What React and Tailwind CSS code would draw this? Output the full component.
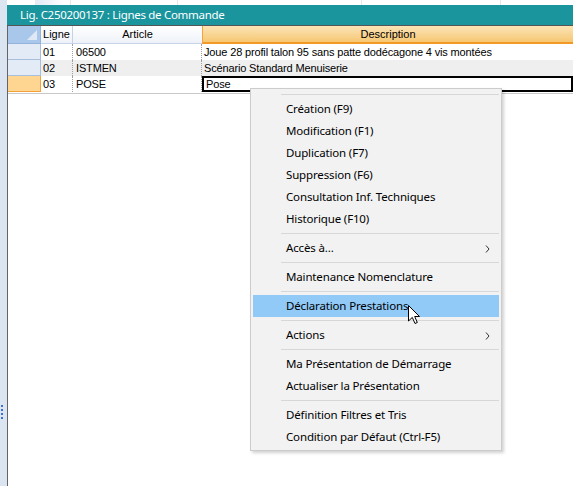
import React from "react";

const menuFont = { fontFamily: '"Noto Sans", "Open Sans", sans-serif' };

function Sep() {
  return (
    <div className="h-[7px] flex items-center pl-[28px]">
      <div className="h-px w-full bg-[#d7d7d7]" />
    </div>
  );
}

function Item({ label, sub, active }) {
  return (
    <div
      className={
        "relative h-[22px] flex items-center pl-[33px] text-[11.5px] tracking-[-0.15px] text-black " +
        (active ? "bg-[#91c9f7]" : "")
      }
    >
      {label}
      {sub && (
        <svg className="absolute right-[9px] top-[8px]" width="5" height="8" viewBox="0 0 5 8">
          <path d="M1 0.5 L4 4 L1 7.5" fill="none" stroke="#333" strokeWidth="1" />
        </svg>
      )}
    </div>
  );
}

function ContextMenu() {
  return (
    <div
      className="absolute left-[250px] top-[88px] w-[252px] bg-[#f2f2f2] border border-[#cccccc] p-[2px] shadow-[2px_2px_3px_rgba(0,0,0,0.18)]"
      style={menuFont}
    >
      <Sep />
      <Item label="Création (F9)" />
      <Item label="Modification (F1)" />
      <Item label="Duplication (F7)" />
      <Item label="Suppression (F6)" />
      <Item label="Consultation Inf. Techniques" />
      <Item label="Historique (F10)" />
      <Sep />
      <Item label="Accès à..." sub />
      <Sep />
      <Item label="Maintenance Nomenclature" />
      <Sep />
      <Item label="Déclaration Prestations" active />
      <Sep />
      <Item label="Actions" sub />
      <Sep />
      <Item label="Ma Présentation de Démarrage" />
      <Item label="Actualiser la Présentation" />
      <Sep />
      <Item label="Définition Filtres et Tris" />
      <Item label="Condition par Défaut (Ctrl-F5)" />
    </div>
  );
}

function Cursor() {
  return (
    <svg className="absolute left-[408px] top-[305px]" width="14" height="20" viewBox="0 0 14 20">
      <path
        d="M0.5 0.5 L0.5 16 L4.3 12.4 L7 18.5 L9.3 17.5 L6.7 11.5 L11.5 11.5 Z"
        fill="#fff"
        stroke="#000"
        strokeWidth="1"
        strokeLinejoin="miter"
      />
    </svg>
  );
}

const rows = [
  { n: "01", a: "06500", d: "Joue 28 profil talon 95 sans patte dodécagone 4 vis montées", bg: "bg-white" },
  { n: "02", a: "ISTMEN", d: "Scénario Standard Menuiserie", bg: "bg-[#efefef]" },
  { n: "03", a: "POSE", d: "Pose", bg: "bg-white", current: true },
];

function Grid() {
  return (
    <div className="flex-1 flex flex-col border-l border-[#646464] bg-white">
      {/* header */}
      <div className="flex h-[18px] text-[11px] text-black">
        <div className="relative w-[33px] h-full bg-[#a9c6eb] border-r border-b border-[#93b2dc]">
          <div className="absolute right-[3px] bottom-[3px] w-0 h-0 border-l-[10px] border-l-transparent border-b-[10px] border-b-[#dfe8f4]" />
        </div>
        <div className="w-[32px] h-full flex items-center justify-center bg-gradient-to-b from-white to-[#eef2f8] border-r border-b border-[#c6d3e6]">
          Ligne
        </div>
        <div className="w-[129px] h-full flex items-center justify-center bg-gradient-to-b from-white to-[#eef2f8] border-b border-[#c6d3e6]">
          Article
        </div>
        <div className="flex-1 h-full flex items-center justify-center bg-gradient-to-b from-[#fbe4b6] to-[#f6c772] border-l border-[#f2a33a] border-b-2 border-b-[#f39a26]">
          Description
        </div>
      </div>
      {rows.map((r) => (
        <div key={r.n} className="flex h-[16px] text-[11px] tracking-[-0.15px] text-black leading-none">
          <div
            className={
              "w-[33px] h-full border-r border-b " +
              (r.current ? "bg-[#fed591] border-[#f2a13c]" : "bg-[#e3ebf7] border-[#a7bedd]")
            }
          />
          <div className={"w-[32px] h-full flex items-center pl-[2px] border-r border-dotted border-[#a0a0a0] " + r.bg}>
            {r.n}
          </div>
          <div className={"w-[129px] h-full flex items-center pl-[3px] border-r border-dotted border-[#a0a0a0] " + r.bg}>
            {r.a}
          </div>
          <div
            className={
              "flex-1 h-full flex items-center pl-[2px] " +
              (r.current ? "border-2 border-black bg-white" : r.bg)
            }
          >
            {r.d}
          </div>
        </div>
      ))}
      <div className="h-[2px] border-b border-[#c8c8c8]" />
      <div className="flex-1" />
    </div>
  );
}

export default function App() {
  return (
    <div
      className="relative w-[573px] h-[486px] bg-white overflow-hidden flex flex-col"
      style={{ fontFamily: '"Liberation Sans", Arial, sans-serif' }}
    >
      {/* toolbar remnant */}
      <div className="h-[5px] flex bg-white">
        <div className="w-[7px] h-full bg-[#dce6f3]" />
        <div className="w-[28px]" />
        <div className="w-[30px] h-full bg-gradient-to-r from-[#e2eaf5] to-white" />
        <div className="w-px h-full bg-[#e3e6ea] ml-[5px]" />
        <div className="w-[106px]" />
        <div className="w-px h-full bg-[#e3e6ea]" />
        <div className="w-[183px]" />
        <div className="w-px h-full bg-[#e3e6ea]" />
        <div className="w-[138px]" />
        <div className="w-px h-full bg-[#e3e6ea]" />
      </div>
      <div className="flex-1 flex">
        {/* left splitter */}
        <div className="relative w-[7px] bg-[#dbe5f2]">
          <div className="absolute left-[1px] top-[400px] flex flex-col gap-[2px]">
            <div className="w-[2px] h-[2px] bg-[#3a6fd8]" />
            <div className="w-[2px] h-[2px] bg-[#3a6fd8]" />
            <div className="w-[2px] h-[2px] bg-[#3a6fd8]" />
            <div className="w-[2px] h-[2px] bg-[#3a6fd8]" />
          </div>
        </div>
        <div className="flex-1 flex flex-col">
          <div
            className="h-[21px] bg-[#1a959e] text-white text-[11.5px] tracking-[-0.3px] flex items-center pl-[13px] border-b border-[#555]"
            style={{ fontFamily: '"Noto Sans", "Open Sans", sans-serif' }}
          >
            Lig. C250200137 : Lignes de Commande
          </div>
          <Grid />
        </div>
      </div>
      <ContextMenu />
      <Cursor />
    </div>
  );
}
